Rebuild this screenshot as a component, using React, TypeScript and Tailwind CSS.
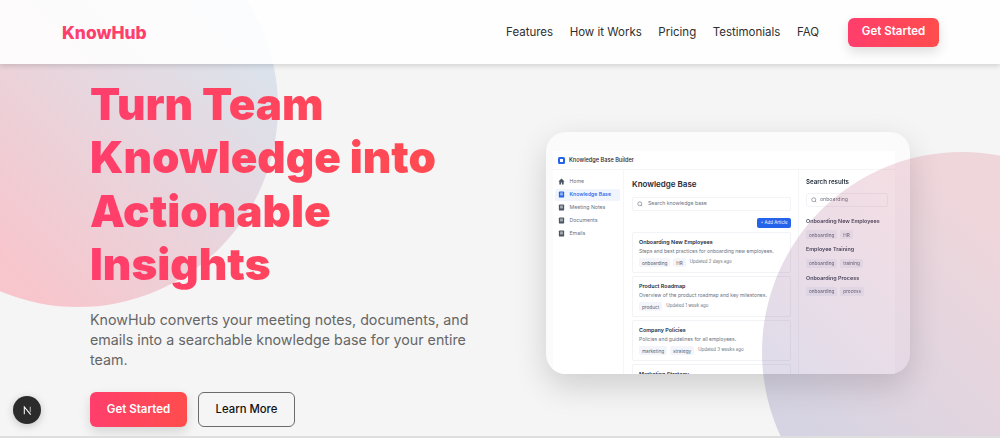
import React from "react";

const Tag = ({ children }: { children: React.ReactNode }) => (
  <span className="rounded-[2px] bg-[#f3f5fa] px-[3px] py-[1.5px] text-[4.7px] leading-[6px] text-[#555d6b]">{children}</span>
);

const Article = ({ title, desc, tags, updated }: { title: string; desc: string; tags: string[]; updated: string }) => (
  <div className="mb-[3px] h-[41px] shrink-0 rounded-[2px] border border-[#f2f3f6] px-[6px] pt-[5px]">
    <div className="text-[5.4px] font-semibold leading-[8px] text-[#1f2937]">{title}</div>
    <div className="mt-[2px] text-[5px] leading-[7px] text-[#6b7280]">{desc}</div>
    <div className="mt-[3px] flex items-center gap-[3px]">
      {tags.map((t) => <Tag key={t}>{t}</Tag>)}
      <span className="ml-[1px] text-[4.4px] text-[#6b7280]">{updated}</span>
    </div>
  </div>
);

const NavIcon = ({ kind, color }: { kind: string; color: string }) => (
  <svg width="7" height="7" viewBox="0 0 8 8" className="shrink-0">
    {kind === "home" ? (
      <path d="M4 .5 .5 4h1v3.5h2V5h1v2.5h2V4h1z" fill={color} />
    ) : (
      <>
        <rect x="1" y="0.5" width="6" height="7" rx="1" fill={color} />
        <rect x="2.3" y="2" width="3.4" height="0.8" fill="#fff" />
        <rect x="2.3" y="4" width="3.4" height="0.8" fill="#fff" />
      </>
    )}
  </svg>
);

const SideItem = ({ label, kind, active }: { label: string; kind: string; active?: boolean }) => (
  <div className={`flex h-[12px] items-center gap-[4.5px] rounded-[2px] px-[3px] text-[5.2px] ${active ? "bg-[#eff4fd] font-medium text-[#2563eb]" : "text-[#6b7280]"}`}>
    <NavIcon kind={kind} color={active ? "#2563eb" : "#4b5563"} />
    <span>{label}</span>
  </div>
);

const SearchIcon = () => (
  <svg width="6" height="6" viewBox="0 0 24 24" fill="none" stroke="#6b7280" strokeWidth="2.5" className="shrink-0">
    <circle cx="11" cy="11" r="8" />
    <path d="m21 21-4.3-4.3" />
  </svg>
);

const Result = ({ title, tags }: { title: string; tags: string[] }) => (
  <div className="mb-[6px]">
    <div className="text-[5.4px] font-semibold leading-[8px] text-[#374151]">{title}</div>
    <div className="mt-[5.3px] flex gap-[3px]">{tags.map((t) => <Tag key={t}>{t}</Tag>)}</div>
  </div>
);

const Dashboard = () => (
  <div className="relative h-[242px] w-[364px] shrink-0 overflow-hidden rounded-[20px] bg-[#fbfbfc] pl-[7px] pr-[15px] pt-[19px] shadow-[0_12px_32px_rgba(0,0,0,0.16)] [font-family:Inter,sans-serif]">
    <div className="flex h-[260px] flex-col rounded-t-[2px] bg-white blur-[0.4px]">
      <div className="flex h-[19px] shrink-0 items-center gap-[4px] border-b border-[#f5f6f8] pl-[5px]">
        <span className="flex h-[7px] w-[7px] items-center justify-center rounded-[1.5px] bg-[#2563eb]">
          <span className="h-[3px] w-[3px] bg-white" />
        </span>
        <span className="text-[5.6px] font-medium text-[#1f2937]">Knowledge Base Builder</span>
      </div>
      <div className="flex min-h-0 flex-1">
        <div className="flex w-[71px] shrink-0 flex-col gap-[1px] border-r border-[#f5f6f8] pl-[2px] pr-[3px] pt-[5.5px]">
          <SideItem label="Home" kind="home" />
          <SideItem label="Knowledge Base" kind="doc" active />
          <SideItem label="Meeting Notes" kind="doc" />
          <SideItem label="Documents" kind="doc" />
          <SideItem label="Emails" kind="doc" />
        </div>
        <div className="flex w-[175px] shrink-0 flex-col overflow-hidden border-r border-[#f5f6f8] pl-[8px] pr-[7px] pt-[8px]">
          <div className="text-[8px] font-semibold leading-[12px] text-[#1f2937]">Knowledge Base</div>
          <div className="mt-[7px] flex h-[14px] shrink-0 items-center gap-[5px] rounded-[2px] border border-[#f2f3f6] px-[4px] text-[5.2px] text-[#6b7280]">
            <SearchIcon />
            Search knowledge base
          </div>
          <div className="mt-[7px] flex justify-end">
            <div className="flex h-[10px] w-[34px] items-center justify-center rounded-[2px] bg-[#2563eb] text-[4.4px] text-white">+ Add Article</div>
          </div>
          <div className="mt-[4px] flex flex-col">
            <Article title="Onboarding New Employees" desc="Steps and best practices for onboarding new employees." tags={["onboarding", "HR"]} updated="Updated 2 days ago" />
            <Article title="Product Roadmap" desc="Overview of the product roadmap and key milestones." tags={["product"]} updated="Updated 1 week ago" />
            <Article title="Company Policies" desc="Policies and guidelines for all employees." tags={["marketing", "strategy"]} updated="Updated 3 weeks ago" />
            <div className="h-[20px] shrink-0 rounded-[2px] border border-[#f2f3f6] px-[6px] pt-[5px] text-[5.4px] font-semibold leading-[8px] text-[#1f2937]">Marketing Strategy</div>
          </div>
        </div>
        <div className="flex-1 px-[7px] pt-[7px]">
          <div className="text-[6.2px] font-semibold leading-[9px] text-[#1f2937]">Search results</div>
          <div className="mt-[7px] flex h-[14px] w-[82px] items-center gap-[3px] rounded-[2px] border border-[#f2f3f6] px-[4px] text-[5.2px] text-[#6b7280]">
            <SearchIcon />
            onboarding
          </div>
          <div className="mt-[10px]">
            <Result title="Onboarding New Employees" tags={["onboarding", "HR"]} />
            <Result title="Employee Training" tags={["onboarding", "training"]} />
            <Result title="Onboarding Process" tags={["onboarding", "process"]} />
          </div>
        </div>
      </div>
    </div>
  </div>
);

export default function App() {
  return (
    <div className="relative h-[438px] w-full overflow-hidden border-b-2 border-[#dedede] bg-[#f5f5f5] [font-family:Inter,sans-serif]">
      <div className="pointer-events-none absolute left-[-122px] top-[-93px] h-[400px] w-[400px] rounded-full bg-[linear-gradient(45deg,#ff3751_21%,#63d7ff_100%)] opacity-25" />

      <header className="relative z-10 flex h-16 items-center justify-between bg-white/90 pl-[62px] pr-[61px] shadow-[0_2px_5px_rgba(0,0,0,0.14)]">
        <div className="mt-[3px] text-[17.4px] font-extrabold text-[#ff3e6c]">KnowHub</div>
        <nav className="flex items-center gap-[16.5px] text-[11.5px] text-[#2f2f2f]">
          <span className="mt-[1px]">Features</span>
          <span className="mt-[1px]">How it Works</span>
          <span className="mt-[1px]">Pricing</span>
          <span className="mt-[1px]">Testimonials</span>
          <span className="mt-[1px]">FAQ</span>
          <button className="ml-[12.5px] h-[29px] w-[91px] rounded-[6px] bg-[linear-gradient(90deg,#ff3e6c,#ff4d4d)] text-[11.5px] font-semibold text-white shadow-[0_5px_12px_rgba(0,0,0,0.13)]">Get Started</button>
        </nav>
      </header>

      <main className="relative flex items-start justify-between pl-[90px] pr-[90px]">
        <div className="w-[400px] shrink-0 pt-[14px]">
          <h1 className="bg-[linear-gradient(90deg,#ff3e6c,#ff4d4d)] bg-clip-text text-[44px] font-black leading-[53.3px] text-transparent">
            Turn Team Knowledge into Actionable Insights
          </h1>
          <p className="mt-[19px] w-[395px] text-[14.25px] leading-[20px] text-[#666666]">
            KnowHub converts your meeting notes, documents, and emails into a searchable knowledge base for your entire team.
          </p>
          <div className="mt-[22px] flex gap-[11px]">
            <button className="h-[35px] w-[97px] rounded-[6px] bg-[linear-gradient(90deg,#ff3e6c,#ff4d4d)] text-[11.5px] font-semibold text-white shadow-[0_5px_12px_rgba(0,0,0,0.13)]">Get Started</button>
            <button className="h-[35px] w-[97px] rounded-[6px] border border-[#6b6b6b] text-[11.3px] font-medium text-[#111111]">Learn More</button>
          </div>
        </div>
        <div className="pt-[68px]">
          <Dashboard />
        </div>
      </main>

      <div className="pointer-events-none absolute left-[762px] top-[152px] h-[400px] w-[400px] rounded-full bg-[linear-gradient(45deg,#5a4f9a_20%,#d75a73_70%)] opacity-20" />

      <div className="absolute left-[13px] top-[396px] flex h-[28px] w-[28px] items-center justify-center rounded-full bg-[#2b2b2b] shadow-[0_2px_8px_rgba(0,0,0,0.2)]">
        <svg width="11" height="11" viewBox="0 0 12 12" fill="none" stroke="#fff" strokeWidth="1.1">
          <path d="M2.5 10V2l7 8.5" />
          <path d="M9 2v6" stroke="#bbb" />
        </svg>
      </div>
    </div>
  );
}
